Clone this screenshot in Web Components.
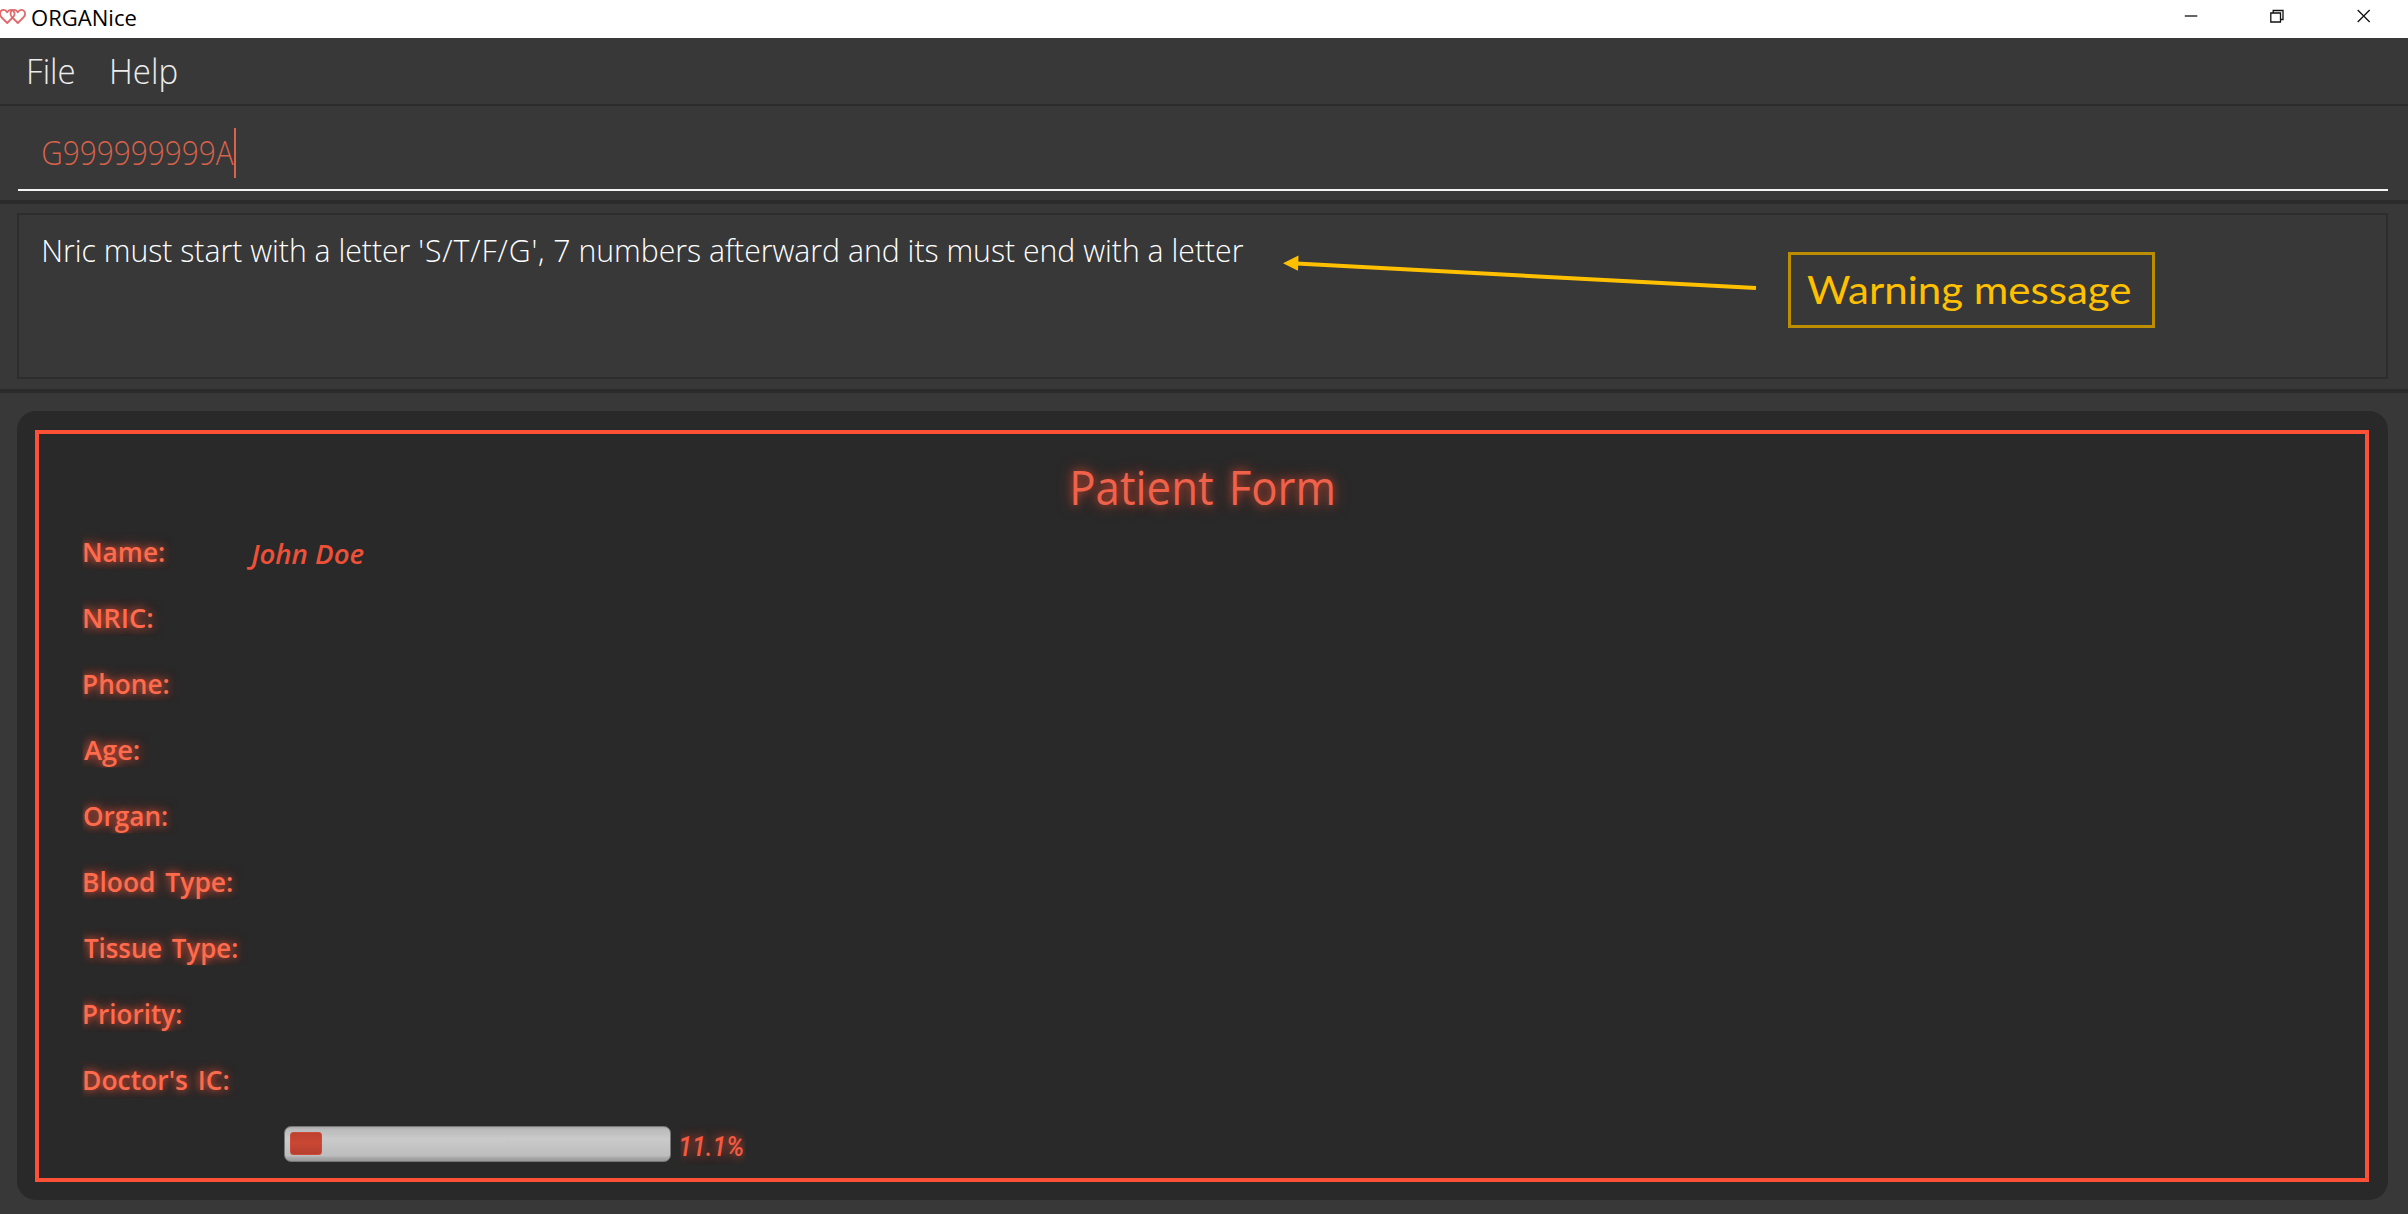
<!DOCTYPE html>
<html lang="en">
<head>
<meta charset="utf-8">
<title>ORGANice</title>
<style>
html,body{margin:0;height:100%;background:#383838;overflow:hidden}
</style>
</head>
<body>
<organice-app></organice-app>
<script>
const define = (name, html, setup) => customElements.define(name, class extends HTMLElement {
  connectedCallback() {
    if (this.shadowRoot) return;
    this.attachShadow({mode: 'open'}).innerHTML = html;
    if (setup) setup(this, this.shadowRoot);
  }
});

/* Text whose inked width is set by its "w" attribute.
   A part given in "loose" is letter-spaced a little wider. */
const pen = document.createElement('canvas').getContext('2d');
define('fit-text', `<style>
:host{display:block;flex:none;white-space:pre}
span{display:inline-block;transform-origin:0 50%}
b{font-weight:inherit;letter-spacing:.95px}
</style><span></span>`, (host, root) => {
  const span = root.querySelector('span');
  const text = host.getAttribute('text');
  const loose = host.getAttribute('loose');
  if (loose) {
    const [before, after] = text.split(loose);
    const b = document.createElement('b');
    b.textContent = loose;
    span.append(before, b, after);
  } else span.textContent = text;
  const cs = getComputedStyle(host);
  pen.font = `${cs.fontStyle} ${cs.fontWeight} ${cs.fontSize} ${cs.fontFamily}`;
  pen.wordSpacing = cs.wordSpacing;
  const m = pen.measureText(text);
  const extra = loose ? loose.length * .95 : 0;
  const w = +host.getAttribute('w');
  const k = w / (m.actualBoundingBoxRight + m.actualBoundingBoxLeft + extra);
  host.style.width = w + 'px';
  span.style.transform = `translateX(${m.actualBoundingBoxLeft * k}px) scaleX(${k})`;
});

define('title-bar', `<style>
:host{display:flex;height:38px;flex:none;background:#fff;color:#000;font:400 22px/35px "Open Sans",sans-serif}
.logo{width:31.5px;height:38px}
.controls{margin-left:auto;display:flex;margin-right:2px}
.controls svg{width:86px;height:34px}
</style>
<svg class="logo" viewBox="0 0 31.5 38" fill="none" stroke="#e2696b" stroke-width="1.8" stroke-linejoin="round">
<path d="M7.2 23 L1.2 17 C-.6 14.6-.2 11.2 2.2 10.2 C4.5 9.3 6.3 10.5 7.2 12.3 C8.2 10.4 10.2 9.3 12.4 10.2 C15 11.4 15.2 14.8 13.2 17 Z"/>
<path d="M17.8 23 L11.8 17 C9.8 14.6 10.2 11.2 12.8 10.2 C15 9.3 16.9 10.5 17.8 12.3 C18.8 10.4 20.8 9.3 23 10.2 C25.6 11.4 25.8 14.8 23.8 17 Z"/>
</svg>
<fit-text text="ORGANice" w="104.5"></fit-text>
<div class="controls">
<svg viewBox="0 0 86 34" stroke="#111" stroke-width="1.3" fill="none"><path d="M36.8 16H49.3"/></svg>
<svg viewBox="0 0 86 34" stroke="#111" stroke-width="1.3" fill="none"><path d="M36.8 13H46.5V22H36.8Z M39.2 13V10.5H49V19.5H46.5"/></svg>
<svg viewBox="0 0 86 34" stroke="#111" stroke-width="1.3" fill="none"><path d="M37.7 10L49.7 22M49.7 10L37.7 22"/></svg>
</div>`);

define('menu-bar', `<style>
:host{display:flex;gap:38px;box-sizing:border-box;height:68px;flex:none;padding-left:28.5px;border-bottom:2px solid #2b2b2b;font:300 34px/66px "Open Sans",sans-serif;color:#ececec}
</style><fit-text text="File" w="45"></fit-text><fit-text text="Help" w="65"></fit-text>`);

define('command-box', `<style>
:host{display:block;box-sizing:border-box;height:98px;flex:none;padding:0 20px 0 18px;border-bottom:4px solid #2b2b2b;font:300 32.5px/93px "Open Sans",sans-serif;color:#d9624b}
.field{display:flex;height:83px;padding-left:25px;border-bottom:2px solid #f4f4f4}
i{width:2px;height:50px;margin-top:22px;background:#d9624b}
</style><div class="field"><fit-text text="G999999999A" w="191"></fit-text><i></i></div>`);

define('result-display', `<style>
:host{display:block;box-sizing:border-box;height:189px;flex:none;padding:9px 20px 0 17px;border-bottom:4px solid #2b2b2b;position:relative}
.box{box-sizing:border-box;height:166px;border:2px solid #2d2d2d;padding-left:24.5px;font:300 32px/70px "Open Sans",sans-serif;color:#fff}
.arrow{position:absolute;left:1280px;top:46px;width:480px;height:46px}
.note{position:absolute;left:1788px;top:48px;width:367px;height:76px;box-sizing:border-box;border:3px solid #bd8d00;padding-left:15.5px;color:#ffc000;font:400 38.5px/69px Lato,sans-serif}
</style>
<div class="box"><fit-text text="Nric must start with a letter 'S/T/F/G', 7 numbers afterward and its must end with a letter" loose="'S/T/F/G'," w="1199"></fit-text></div>
<svg class="arrow" viewBox="0 0 480 46"><path d="M12 13.3L476 38" stroke="#ffc000" stroke-width="4"/><path d="M3 13.2L18.5 5.5L18 20.8Z" fill="#ffc000"/></svg>
<div class="note"><fit-text text="Warning message" w="323"></fit-text></div>`);

define('form-row', `<style>
:host{display:flex;height:66px}
.label{width:163.5px;color:#ff6b4d;font:600 26.7px/37px "Open Sans",sans-serif;word-spacing:3px}
.glow{display:inline-block;height:37px;padding:0 11px 0 1px;margin-top:1px;clip-path:inset(0);text-shadow:0 0 8px rgba(255,85,55,.7),0 0 14px rgba(255,85,55,.6)}
.value{font:italic 600 26.7px/43px "Open Sans",sans-serif;color:#ee5038}
</style><div class="label"><div class="glow"></div></div><div class="value"><slot></slot></div>`, (host, root) => {
  const t = document.createElement('fit-text');
  t.setAttribute('text', host.getAttribute('label'));
  t.setAttribute('w', host.getAttribute('w'));
  root.querySelector('.glow').append(t);
});

define('form-progress', `<style>
:host{display:flex;padding-left:201px;gap:10px;height:42px}
.track{box-sizing:border-box;width:387px;height:36px;border:1px solid #777;border-radius:7px;padding:5px;background:linear-gradient(#aaa,#bbb 8%,#cacaca 35%,#bdbdbd 85%,#aaa 90%,#999)}
.bar{width:32px;height:23px;border-radius:3px;box-sizing:border-box;border:1px solid #cc4a39;background:linear-gradient(#bd4130,#c94733 50%,#b63f30)}
.pct{clip-path:inset(0);height:38px;width:65px;margin-top:1px;font:italic 500 27px/40px Roboto,sans-serif;color:#f45a40;text-shadow:0 0 9px rgba(255,80,50,.5),0 0 13px rgba(255,80,50,.5)}
</style><div class="track"><div class="bar"></div></div><div class="pct"><fit-text text="11.1%" w="62"></fit-text></div>`);

define('patient-form', `<style>
:host{display:block;box-sizing:border-box;height:789px;margin:18px 20px 0 17px;padding:19px 19px 18px 18px;background:#292929;border-radius:19px}
.frame{box-sizing:border-box;height:752px;border:4px solid #fe5037;padding:31px 0 0 43.5px}
.title{display:flex;justify-content:center;margin-right:42px;height:66.5px;font:400 46.7px/44px "Open Sans",sans-serif;word-spacing:4px;color:#f0614a;text-shadow:0 0 9px rgba(255,80,50,.55),0 0 15px rgba(255,80,50,.5)}
</style><div class="frame"><div class="title"><fit-text text="Patient Form" w="260"></fit-text></div>
<form-row label="Name:" w="80"><fit-text text="John Doe" w="118"></fit-text></form-row>
<form-row label="NRIC:" w="68.5"></form-row>
<form-row label="Phone:" w="84.5"></form-row>
<form-row label="Age:" w="55"></form-row>
<form-row label="Organ:" w="83"></form-row>
<form-row label="Blood Type:" w="148"></form-row>
<form-row label="Tissue Type:" w="153"></form-row>
<form-row label="Priority:" w="97"></form-row>
<form-row label="Doctor's IC:" w="144.5"></form-row>
<form-progress></form-progress></div>`);

define('organice-app', `<style>
:host{display:flex;flex-direction:column;height:100vh;background:#383838}
</style><title-bar></title-bar><menu-bar></menu-bar><command-box></command-box><result-display></result-display><patient-form></patient-form>`);
</script>
</body>
</html>
